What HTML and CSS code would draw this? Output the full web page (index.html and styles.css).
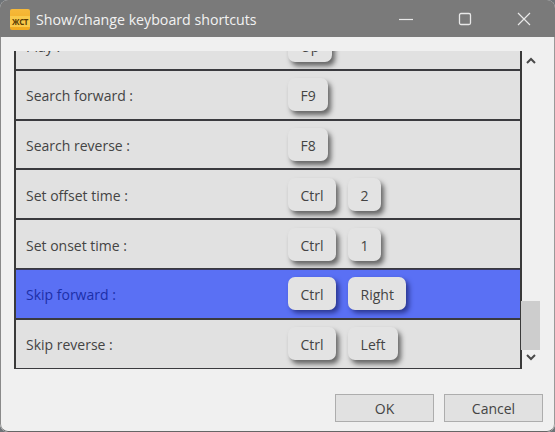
FILE: index.html
```html
<!DOCTYPE html>
<html>
<head>
<meta charset="utf-8">
<title>Show/change keyboard shortcuts</title>
<link rel="stylesheet" href="styles.css">
</head>
<body>
<div class="window">
  <div class="titlebar">
    <div class="appicon"><span>ЖСТ</span></div>
    <div class="title">Show/change keyboard shortcuts</div>
    <div class="controls">
      <svg width="14" height="14" viewBox="0 0 14 14"><path d="M0 7.5H14" stroke="#e8e8e8" stroke-width="1.2"/></svg>
      <svg width="14" height="14" viewBox="0 0 14 14"><rect x="1.5" y="1.5" width="11" height="11" rx="1.5" fill="none" stroke="#e8e8e8" stroke-width="1.3"/></svg>
      <svg width="14" height="14" viewBox="0 0 14 14"><path d="M1 1L13 13M13 1L1 13" stroke="#e8e8e8" stroke-width="1.2"/></svg>
    </div>
  </div>
  <div class="client">
    <div class="listarea">
      <div class="viewport">
        <div class="list">
          <div class="row"><span class="label">Play :</span><span class="keys"><span class="key">Up</span></span></div>
          <div class="row"><span class="label">Search forward :</span><span class="keys"><span class="key">F9</span></span></div>
          <div class="row"><span class="label">Search reverse :</span><span class="keys"><span class="key">F8</span></span></div>
          <div class="row"><span class="label">Set offset time :</span><span class="keys"><span class="key">Ctrl</span><span class="key">2</span></span></div>
          <div class="row"><span class="label">Set onset time :</span><span class="keys"><span class="key">Ctrl</span><span class="key">1</span></span></div>
          <div class="row selected"><span class="label">Skip forward :</span><span class="keys"><span class="key">Ctrl</span><span class="key">Right</span></span></div>
          <div class="row"><span class="label">Skip reverse :</span><span class="keys"><span class="key">Ctrl</span><span class="key">Left</span></span></div>
        </div>
      </div>
      <div class="scrollbar">
        <svg class="arrow" width="10" height="7" viewBox="0 0 10 7"><path d="M1 6L5 2L9 6" fill="none" stroke="#4a4a4a" stroke-width="2"/></svg>
        <div class="thumb"></div>
        <svg class="arrow" width="10" height="7" viewBox="0 0 10 7"><path d="M1 1L5 5L9 1" fill="none" stroke="#4a4a4a" stroke-width="2"/></svg>
      </div>
    </div>
    <div class="buttons">
      <button>OK</button>
      <button>Cancel</button>
    </div>
  </div>
</div>
</body>
</html>
```

FILE: styles.css
```css
html, body { margin: 0; height: 100%; }
body { background: #6f7478; font-family: "Open Sans", "Noto Sans", sans-serif; overflow: hidden; }

.window { height: 432px; display: flex; flex-direction: column; border-radius: 8px; overflow: hidden; background: #f0f0f0; }

.titlebar { height: 37px; flex: none; background: #7a7a7a; display: flex; align-items: center; padding-left: 10px; box-sizing: border-box; }
.appicon { width: 20px; height: 21px; margin-top: 2px; border-radius: 2px; background: linear-gradient(#f6b93a, #f0a91e); display: flex; align-items: flex-end; justify-content: center; }
.appicon span { font-size: 8px; font-weight: 700; color: #5a3a00; background: #f9c94a; width: 100%; text-align: center; margin-bottom: 3px; letter-spacing: -0.5px; height: 11px; line-height: 11px; }
.title { margin-left: 6px; margin-top: 1px; font-size: 14.2px; color: #f2f2f2; }
.controls { margin-left: auto; display: flex; gap: 45px; padding-right: 24px; }

.client { flex: 1; display: flex; flex-direction: column; border-left: 1px solid #8a8a8a; border-bottom: 1px solid #666; border-right: 1px solid #999; border-radius: 0 0 8px 8px; }

.listarea { display: flex; margin: 14px 0 0 13px; height: 318px; }
.viewport { width: 508px; height: 318px; overflow: hidden; box-sizing: border-box; border-left: 2px solid #3a3a3a; border-right: 2px solid #3a3a3a; }
.list { margin-top: -29px; }
.row { height: 49.8px; box-sizing: border-box; display: flex; align-items: center; background: #e1e1e1; border-bottom: 2px solid #3a3a3e; font-size: 14px; color: #444; }
.row:first-child { height: 48.8px; }
.row.selected { background: #5a70f4; color: #1c2fa8; border-top: 1px solid #3a3a5e; margin-top: -1px; height: 50.8px; }
.label { width: 272px; padding: 2px 0 0 10px; box-sizing: border-box; }
.keys { display: flex; gap: 12px; }
.key { height: 33px; padding: 2px 12.5px 0; box-sizing: border-box; display: flex; align-items: center; justify-content: center; background: #e3e3e3; border-radius: 7px; box-shadow: 3px 4px 5px #666; }
.selected .key { color: #444; box-shadow: 3px 3px 5px #2a3690; }

.scrollbar { width: 21px; display: flex; flex-direction: column; align-items: center; padding: 6px 0 8px; box-sizing: border-box; }
.scrollbar .arrow { flex: none; margin-right: 3px; }
.thumb { width: 19px; height: 49px; background: #cdcdcd; margin: auto 0 4px -1px; align-self: flex-start; }

.buttons { display: flex; justify-content: flex-end; gap: 10px; margin-top: 25px; padding-right: 11px; }
button { width: 99px; height: 28px; border: 1px solid #adadad; background: #e1e1e1; font-family: inherit; font-size: 14px; color: #444; padding: 0; }
```
